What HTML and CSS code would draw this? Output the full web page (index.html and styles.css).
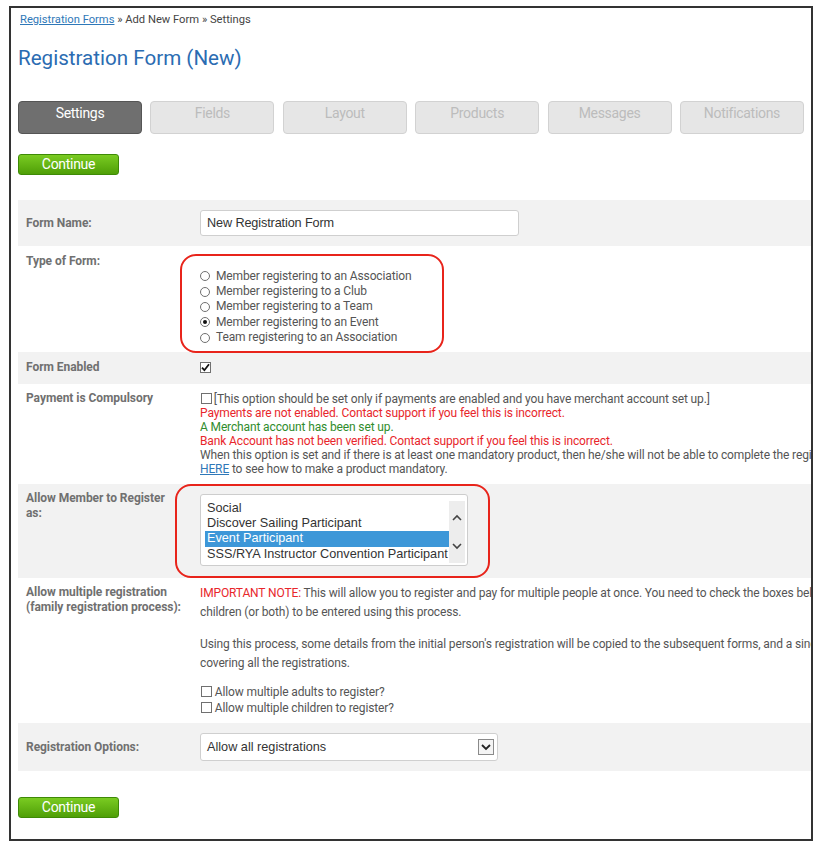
FILE: index.html
```html
<!DOCTYPE html>
<html>
<head>
<meta charset="utf-8">
<link rel="stylesheet" href="styles.css">
</head>
<body>
<div class="frame">
  <div class="crumbs"><a href="#">Registration Forms</a> » Add New Form » Settings</div>
  <h1 class="title">Registration Form (New)</h1>
  <div class="tabs">
    <div class="tab active">Settings</div>
    <div class="tab">Fields</div>
    <div class="tab">Layout</div>
    <div class="tab">Products</div>
    <div class="tab">Messages</div>
    <div class="tab">Notifications</div>
  </div>
  <div class="btn-row first"><span class="continue">Continue</span></div>

  <div class="form">
    <div class="row grey center r1">
      <div class="label">Form Name:</div>
      <div class="value"><div class="input">New Registration Form</div></div>
    </div>

    <div class="row r2">
      <div class="label l2">Type of Form:</div>
      <div class="value">
        <div class="ring ring1">
          <div class="opt"><span class="radio"></span>Member registering to an Association</div>
          <div class="opt"><span class="radio"></span>Member registering to a Club</div>
          <div class="opt"><span class="radio"></span>Member registering to a Team</div>
          <div class="opt"><span class="radio on"></span>Member registering to an Event</div>
          <div class="opt"><span class="radio"></span>Team registering to an Association</div>
        </div>
      </div>
    </div>

    <div class="row grey r3">
      <div class="label">Form Enabled</div>
      <div class="value"><span class="check on"><svg width="9" height="9" viewBox="0 0 9 9"><path d="M1 4.6 L3.4 7.2 L8 1.3" fill="none" stroke="#111" stroke-width="1.8"/></svg></span></div>
    </div>

    <div class="row r4">
      <div class="label">Payment is Compulsory</div>
      <div class="value lines">
        <div><span class="check"></span> [This option should be set only if payments are enabled and you have merchant account set up.]</div>
        <div class="red">Payments are not enabled. Contact support if you feel this is incorrect.</div>
        <div class="green">A Merchant account has been set up.</div>
        <div class="red">Bank Account has not been verified. Contact support if you feel this is incorrect.</div>
        <div>When this option is set and if there is at least one mandatory product, then he/she will not be able to complete the registration without purchasing it. Click</div>
        <div><a href="#">HERE</a> to see how to make a product mandatory.</div>
      </div>
    </div>

    <div class="row grey r5">
      <div class="label">Allow Member to Register<br>as:</div>
      <div class="value">
        <div class="ring ring2">
          <div class="listbox">
            <div class="items">
              <div class="item">Social</div>
              <div class="item">Discover Sailing Participant</div>
              <div class="item sel">Event Participant</div>
              <div class="item">SSS/RYA Instructor Convention Participant</div>
            </div>
            <div class="scroll">
              <svg width="10" height="7" viewBox="0 0 10 7"><path d="M1 6 L5 2 L9 6" fill="none" stroke="#444" stroke-width="1.6"/></svg>
              <svg width="10" height="7" viewBox="0 0 10 7"><path d="M1 1 L5 5 L9 1" fill="none" stroke="#444" stroke-width="1.6"/></svg>
            </div>
          </div>
        </div>
      </div>
    </div>

    <div class="row r6">
      <div class="label">Allow multiple registration<br>(family registration process):</div>
      <div class="value">
        <p class="para"><span class="red">IMPORTANT NOTE:</span> This will allow you to register and pay for multiple people at once. You need to check the boxes below to allow adults or<br>children (or both) to be entered using this process.</p>
        <p class="para">Using this process, some details from the initial person's registration will be copied to the subsequent forms, and a single payment will be made<br>covering all the registrations.</p>
        <div class="checks">
          <div><span class="check"></span> Allow multiple adults to register?</div>
          <div><span class="check"></span> Allow multiple children to register?</div>
        </div>
      </div>
    </div>

    <div class="row grey center r7">
      <div class="label">Registration Options:</div>
      <div class="value">
        <div class="select">
          <span>Allow all registrations</span>
          <span class="arrow"><svg width="10" height="7" viewBox="0 0 10 7"><path d="M1 1 L5 5 L9 1" fill="none" stroke="#222" stroke-width="1.8"/></svg></span>
        </div>
      </div>
    </div>
  </div>

  <div class="btn-row last"><span class="continue">Continue</span></div>
</div>
</body>
</html>
```

FILE: styles.css
```css
* { box-sizing: border-box; }
html, body { margin: 0; padding: 0; background: #fff; }
body { font-family: Roboto, "Noto Sans", sans-serif; color: #555; font-size: 12px; }

.frame {
  margin: 6px 0 0 9px;
  width: 804px;
  height: 835px;
  border: 2px solid #333;
  padding: 5px 0 0 7px;
  overflow: hidden;
}

.crumbs { font-size: 11.2px; line-height: 14px; color: #444; padding-left: 2px; }
.crumbs a { color: #2f78b8; text-decoration: underline; }

.title {
  margin: 18px 0 0 0;
  font-size: 20.6px;
  line-height: 26px;
  font-weight: 400;
  color: #2b6cb2;
}

.tabs { display: flex; gap: 8.4px; margin-top: 30px; }
.tab {
  width: 124px;
  height: 33px;
  border: 1px solid #d2d2d2;
  border-radius: 4px;
  background: #e6e6e6;
  color: #bcbcbc;
  font-size: 14px;
  line-height: 16px;
  padding-top: 3px;
  text-align: center;
  letter-spacing: -0.3px;
}
.tab.active { background: #6f6f6f; border-color: #555; color: #fff; }

.btn-row.first { margin-top: 20px; height: 21px; }
.btn-row.last { margin-top: 26px; height: 21px; }
.continue {
  display: inline-block;
  width: 101px;
  height: 21px;
  border: 1px solid #3e8a06;
  border-radius: 3px;
  background: linear-gradient(#7acb22, #4f9f07);
  color: #fff;
  font-size: 14px;
  line-height: 19px;
  text-align: center;
  letter-spacing: -0.3px;
}

.form { margin-top: 25px; width: 1000px; }
.row { display: grid; grid-template-columns: 182px 1fr; }
.row.grey { background: #f2f2f2; }
.row.center { align-items: center; }

.label {
  padding: 7px 0 0 8px;
  font-weight: 700;
  color: #707070;
  font-size: 12px;
  line-height: 15px;
  letter-spacing: -0.05px;
}
.row.center .label { padding-top: 0; }
.label.l2 { padding-top: 8px; }

.r1 { height: 46px; }
.input {
  width: 319px;
  height: 26px;
  border: 1px solid #cfcfcf;
  border-radius: 3px;
  background: #fff;
  font-family: "Liberation Sans", Arial, sans-serif;
  font-size: 12.7px;
  color: #333;
  line-height: 24px;
  padding-left: 6px;
}

.value { letter-spacing: -0.13px; }

.r2 .value { padding-top: 8px; }
.ring {
  border: 2px solid #e8241b;
  border-radius: 16px;
}
.ring1 {
  width: 264px;
  height: 99px;
  margin-left: -20px;
  margin-bottom: -1px;
  padding: 12.5px 0 0 18px;
  position: relative;
}
.opt { line-height: 15.4px; white-space: nowrap; display: flex; align-items: center; }
.radio {
  display: inline-block;
  width: 10px;
  height: 10px;
  border: 1px solid #707070;
  border-radius: 50%;
  margin-right: 6px;
  background: #fff;
  position: relative;
}
.radio.on::after {
  content: "";
  position: absolute;
  left: 2px; top: 2px;
  width: 4px; height: 4px;
  border-radius: 50%;
  background: #111;
}

.r3 { height: 32px; }
.r3 .label { padding-top: 8px; }
.r3 .value { padding-top: 9px; }
.check {
  display: inline-block;
  width: 11px;
  height: 11px;
  border: 1px solid #707070;
  background: #fff;
  vertical-align: -1px;
  position: relative;
}
.check svg { position: absolute; left: 0; top: 0; }

.r4 .value { padding: 8px 0 8px 0; }
.lines div { line-height: 14px; white-space: nowrap; }
.lines .check { margin-left: 1px; margin-right: -1px; }
.red { color: #e8262b; }
.green { color: #2f8c2c; }
.value a { color: #2f78b8; text-decoration: underline; }

.ring2 {
  width: 315px;
  height: 94px;
  margin-left: -25px;
  padding: 8px 0 0 23px;
}
.listbox {
  width: 268px;
  height: 72px;
  border: 1px solid #cdcdcd;
  border-radius: 3px;
  background: #fff;
  display: flex;
  padding: 5.5px 0 0 4px;
  font-family: "Liberation Sans", Arial, sans-serif;
  font-size: 12.7px;
  letter-spacing: 0;
  color: #333;
}
.items { width: 244px; }
.item { line-height: 15.4px; padding-left: 2px; white-space: nowrap; }
.item.sel { background: #3d97d8; color: #fff; }
.scroll {
  width: 16px;
  height: 62px;
  background: #ededed;
  display: flex;
  flex-direction: column;
  align-items: center;
  justify-content: center;
  gap: 22px;
}

.r6 .value { padding: 6px 0 7px 0; }
.para { margin: 0 0 13px 0; line-height: 19px; white-space: nowrap; }
.checks { margin-top: -2px; }
.checks div { line-height: 16px; }
.checks .check { margin-left: 1px; }

.r7 { height: 48px; }
.select {
  width: 298px;
  height: 28px;
  border: 1px solid #cfcfcf;
  border-radius: 3px;
  background: #fff;
  display: flex;
  align-items: center;
  justify-content: space-between;
  padding: 0 3px 0 6px;
  font-family: "Liberation Sans", Arial, sans-serif;
  font-size: 12.7px;
  letter-spacing: 0;
  color: #333;
}
.arrow {
  width: 16px;
  height: 16px;
  border: 1px solid #8a8a8a;
  background: #f4f4f4;
  display: flex;
  align-items: center;
  justify-content: center;
}
```
